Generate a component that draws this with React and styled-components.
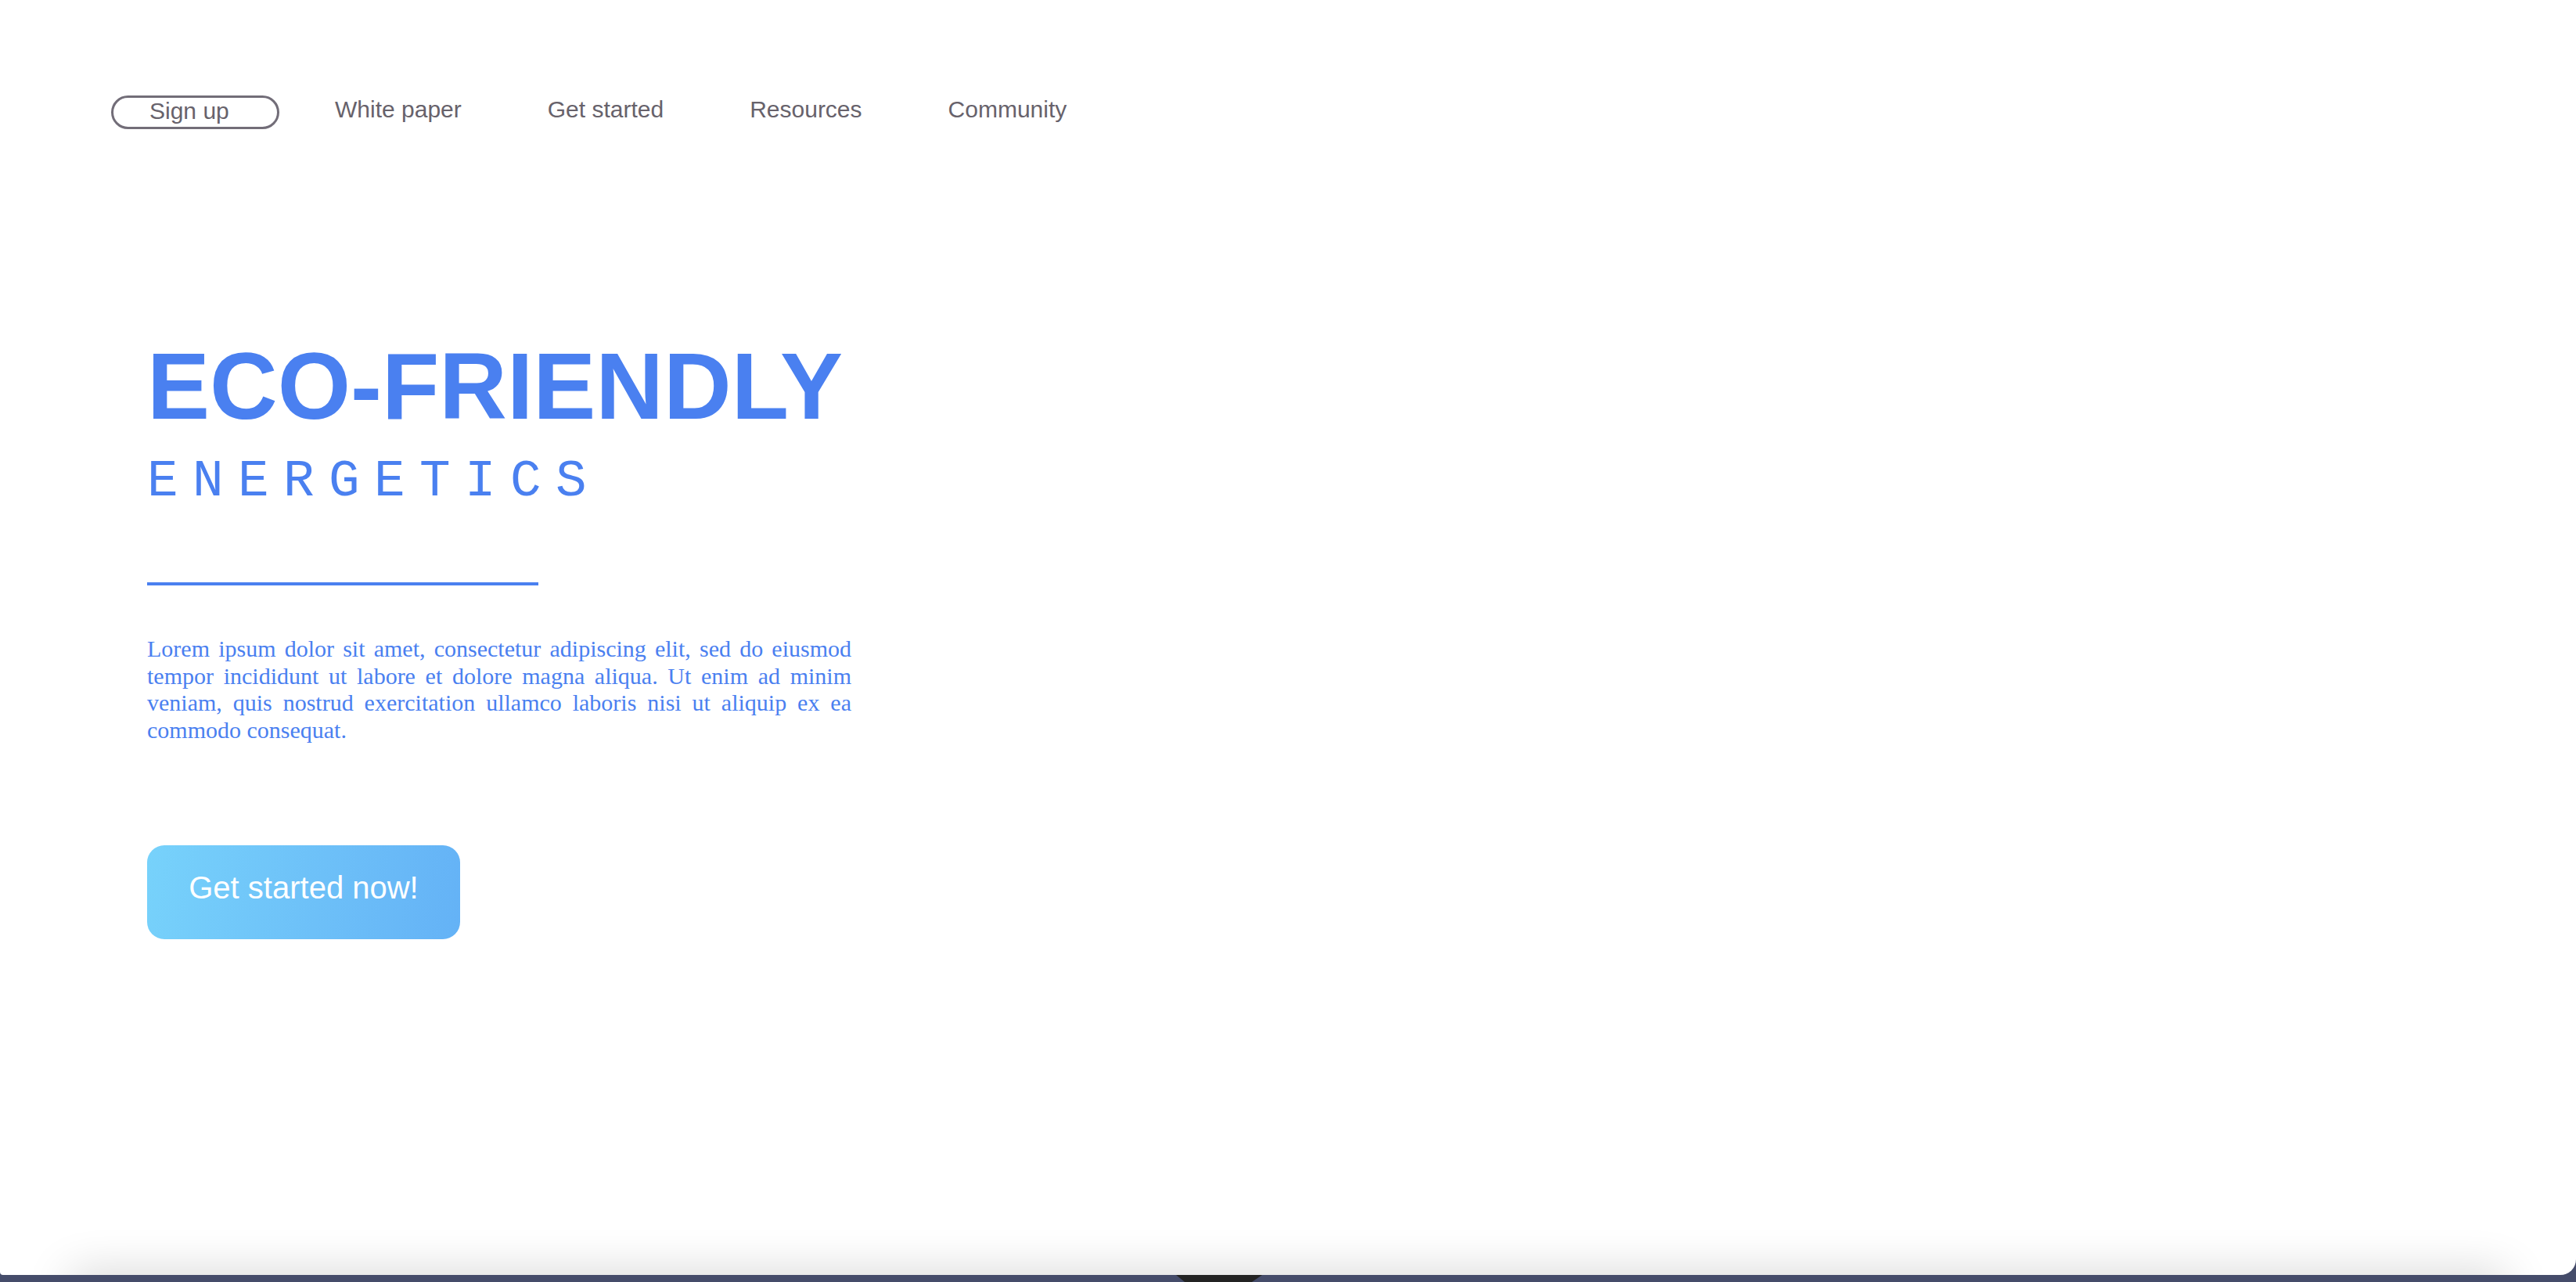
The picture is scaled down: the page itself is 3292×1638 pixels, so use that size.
import * as React from 'react';
import styled, { createGlobalStyle } from 'styled-components';

const BLUE = '#4a80f0';
const GREY = '#67626b';

const GlobalStyle = createGlobalStyle`
  html, body {
    margin: 0;
    padding: 0;
    background: #454c6a;
  }
  * {
    box-sizing: border-box;
  }
`;

const SDesktop = styled.div`
  width: 3292px;
  height: 1638px;
  display: flex;
  flex-direction: column;
  overflow: hidden;
  background: #454c6a;
`;

const SWindow = styled.div`
  position: relative;
  height: 1629px;
  flex: none;
  background: #fff;
  border-radius: 0 0 20px 4px;
  overflow: hidden;
  font-family: 'Liberation Sans', Arial, sans-serif;

  &::after {
    content: '';
    position: absolute;
    left: 90px;
    right: 90px;
    bottom: -40px;
    height: 40px;
    box-shadow: 0 0 60px rgba(0, 0, 0, 0.2);
  }
`;

const SDock = styled.div`
  flex: 1;
  display: flex;
`;

const SDockTab = styled.div`
  margin-left: 1503px;
  width: 110px;
  height: 100%;
  background: #232323;
  clip-path: polygon(0 0, 100% 0, 88% 100%, 10% 100%);
`;

const SNav = styled.nav`
  display: flex;
  align-items: flex-start;
  gap: 71px;
  padding: 122px 0 0 142px;
`;

const SSignUp = styled.a`
  display: block;
  width: 215px;
  height: 43px;
  padding: 0 0 4px 46px;
  border: 3px solid #726d78;
  border-radius: 22px;
  font-size: 30px;
  line-height: 33px;
  color: ${GREY};
  cursor: pointer;
`;

const SLinks = styled.div`
  display: flex;
  gap: 110px;
`;

const SLink = styled.a`
  font-size: 30px;
  line-height: 35px;
  color: ${GREY};
  cursor: pointer;
`;

const SHero = styled.section`
  display: flex;
  flex-direction: column;
  align-items: flex-start;
  padding: 0 0 0 188px;
  margin-top: 268px;
`;

const STitle = styled.h1`
  margin: 0;
  font-family: 'Liberation Sans', Arial, sans-serif;
  font-weight: bold;
  font-size: 120px;
  line-height: 120px;
  color: ${BLUE};
`;

const SSubtitle = styled.h2`
  margin: 30px 0 0;
  font-family: 'Liberation Mono', 'Courier New', monospace;
  font-weight: normal;
  font-size: 66px;
  line-height: 66px;
  letter-spacing: 18.4px;
  color: ${BLUE};
`;

const SRule = styled.hr`
  margin: 95px 0 0;
  width: 500px;
  height: 4px;
  border: none;
  background: ${BLUE};
`;

const SText = styled.p`
  margin: 64px 0 0;
  width: 900px;
  font-family: 'Liberation Serif', 'Times New Roman', serif;
  font-size: 30px;
  line-height: 34.5px;
  text-align: justify;
  color: ${BLUE};
`;

const SButton = styled.button`
  margin-top: 130px;
  width: 400px;
  height: 120px;
  padding: 0 0 13px;
  border: none;
  border-radius: 22px;
  background: linear-gradient(100deg, #77d2fb 0%, #6dc0f8 55%, #64b2f6 100%);
  font-family: 'Liberation Sans', Arial, sans-serif;
  font-size: 40px;
  line-height: 40px;
  color: #fff;
  cursor: pointer;
`;

const navLinks = ['White paper', 'Get started', 'Resources', 'Community'];

const App = () => (
  <SDesktop>
    <GlobalStyle />
    <SWindow>
      <SNav>
        <SSignUp>Sign up</SSignUp>
        <SLinks>
          {navLinks.map((label) => (
            <SLink key={label}>{label}</SLink>
          ))}
        </SLinks>
      </SNav>
      <SHero>
        <STitle>ECO-FRIENDLY</STitle>
        <SSubtitle>ENERGETICS</SSubtitle>
        <SRule />
        <SText>
          Lorem ipsum dolor sit amet, consectetur adipiscing elit, sed do
          eiusmod tempor incididunt ut labore et dolore magna aliqua. Ut enim
          ad minim veniam, quis nostrud exercitation ullamco laboris nisi ut
          aliquip ex ea commodo consequat.
        </SText>
        <SButton>Get started now!</SButton>
      </SHero>
    </SWindow>
    <SDock>
      <SDockTab />
    </SDock>
  </SDesktop>
);

export default App;
